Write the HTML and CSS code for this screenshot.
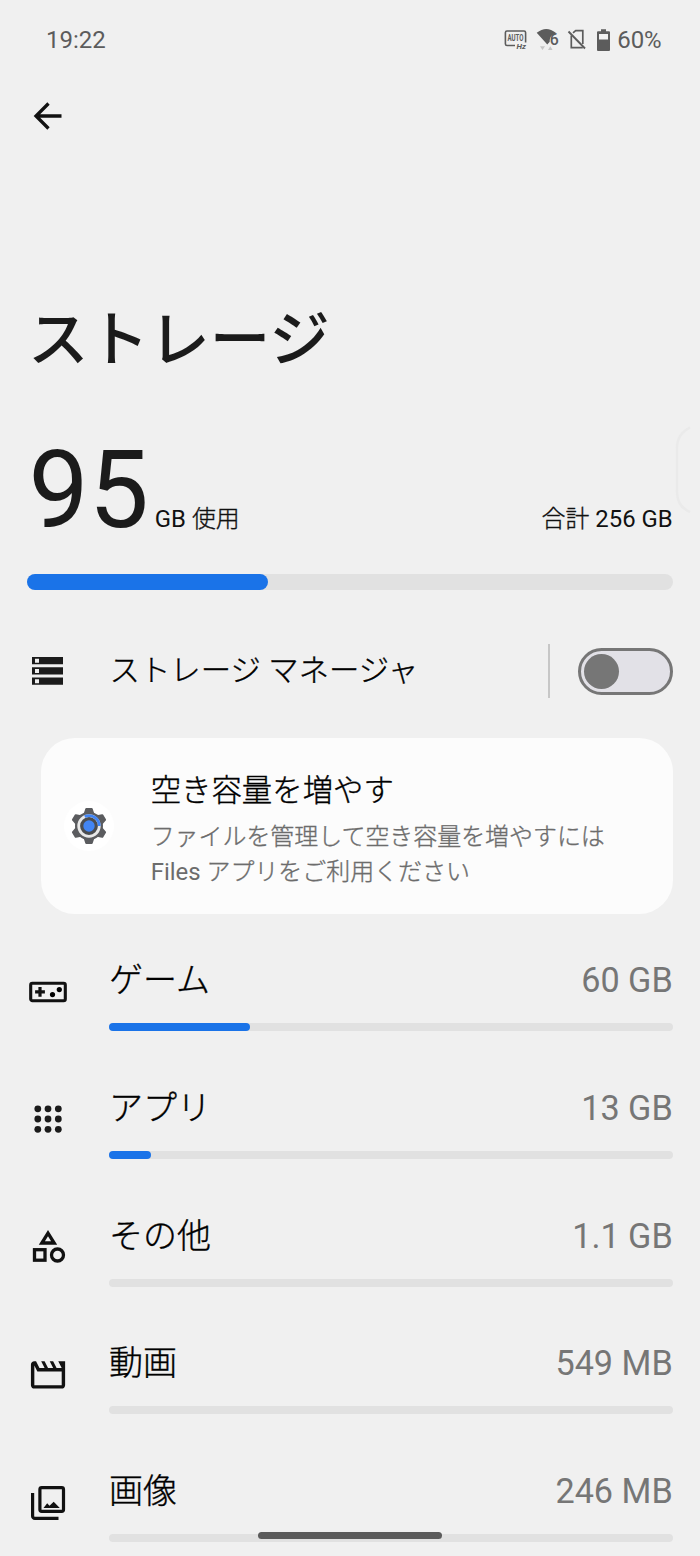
FILE: index.html
```html
<!DOCTYPE html>
<html lang="ja">
<head>
<meta charset="utf-8">
<title>ストレージ</title>
<link rel="stylesheet" href="styles.css">
</head>
<body>
<div class="screen">
  <header class="status">
    <span class="clock">19:22</span>
    <div class="status-icons">
      <svg class="ic-hz" width="24" height="24" viewBox="0 0 24 24">
        <path d="M11 17.500H3A1.600 1.600 0 0 1 1.400 16V4.500A1.600 1.600 0 0 1 3 3H20A1.600 1.600 0 0 1 21.600 4.500V14.500" fill="none" stroke="#5c5c5c" stroke-width="1.600"/>
        <text x="3.500" y="12.800" class="hz-auto" textLength="16" lengthAdjust="spacingAndGlyphs">AUTO</text>
        <text x="12.500" y="21.300" class="hz-unit">Hz</text>
      </svg>
      <svg class="ic-wifi" width="24" height="24" viewBox="0 0 24 24">
        <path d="M.7 4.800Q10.300-2.800 19.800 4.800L18.500 6.300C15 7 13.700 10 13.700 13.800L11.300 16.500Z" fill="#5c5c5c"/>
        <path d="M4 18.300h5l-2.500 3.700zM12 22h4.600l-2.300-3.700z" fill="#c6c6c6"/>
        <text x="13.800" y="17" class="wifi-six" textLength="9" lengthAdjust="spacingAndGlyphs">6</text>
      </svg>
      <svg class="ic-sim" width="20" height="22" viewBox="0 0 20 22">
        <path d="M6 3.800L8.700 1.600H15.800V15M15.800 18.600H4.300V6.500" fill="none" stroke="#5c5c5c" stroke-width="1.700"/>
        <path d="M1.500 2.500L18 19.500" stroke="#5c5c5c" stroke-width="1.900"/>
      </svg>
      <svg class="ic-batt" width="13" height="22" viewBox="0 0 13 22">
        <path fill-rule="evenodd" d="M4 .3H9V2.300H12A1 1 0 0 1 13 3.300V21A1 1 0 0 1 12 22H1A1 1 0 0 1 0 21V3.300A1 1 0 0 1 1 2.300H4ZM2 5V10.500H11V5Z" fill="#5c5c5c"/>
      </svg>
      <span class="percent">60%</span>
    </div>
  </header>

  <nav class="toolbar">
    <svg width="28" height="28" viewBox="0 0 28 28"><path d="M14.500 1.500L2 14L14.500 26.500M2 14H27.500" fill="none" stroke="#111" stroke-width="3.300"/></svg>
  </nav>

  <h1 class="title">ストレージ</h1>

  <section class="usage">
    <div class="used"><span class="number">95</span><span class="unit">GB <span class="light">使用</span></span></div>
    <span class="total"><span class="light">合計</span> 256 GB</span>
  </section>
  <div class="meter"><div class="meter-fill" style="width:241px"></div></div>

  <section class="manager">
    <svg class="manager-icon" width="31" height="28" viewBox="0 0 31 28">
      <path d="M0 0H31V7.300H0ZM0 10.300H31V17.600H0ZM0 20.500H31V27.800H0Z" fill="#1b1b1b"/>
      <path d="M3 1.700h4v4h-4zM3 12h4v4h-4zM3 22.200h4v4h-4z" fill="#f0f0f0"/>
    </svg>
    <span class="manager-label light">ストレージ マネージャ</span>
    <span class="divider"></span>
    <span class="switch"><span class="thumb"></span></span>
  </section>

  <section class="card">
    <div class="card-icon">
      <svg width="36" height="38" viewBox="-18 -19 36 38">
        <g fill="#5b5c5f">
          <circle r="14"/>
          <path id="tooth" d="M-5.400-12L-3.700-17.200Q-3.500-18-2.700-18H2.700Q3.500-18 3.700-17.200L5.400-12Z"/>
          <use href="#tooth" transform="rotate(60)"/><use href="#tooth" transform="rotate(120)"/><use href="#tooth" transform="rotate(180)"/><use href="#tooth" transform="rotate(240)"/><use href="#tooth" transform="rotate(300)"/>
        </g>
        <circle r="10.300" fill="#4b4d50" stroke="#e8e8e8" stroke-width="2.800"/>
        <path d="M-4.300-9.400A10.300 10.300 0 0 1 10.300 0" fill="none" stroke="#4285f4" stroke-width="2.800"/>
        <circle r="5.700" fill="#4285f4"/>
      </svg>
    </div>
    <div class="card-text">
      <div class="card-title light">空き容量を増やす</div>
      <div class="card-body"><span class="light">ファイルを管理して空き容量を増やすには</span><br>Files <span class="light">アプリをご利用ください</span></div>
    </div>
  </section>

  <ul class="list">
    <li class="row">
      <svg width="40" height="40" viewBox="0 0 40 40">
        <rect x="2.700" y="11.300" width="34.600" height="17.400" rx="1.700" fill="none" stroke="#111" stroke-width="3.100"/>
        <path d="M12 15v9.800M7.100 19.900h9.800" stroke="#111" stroke-width="3.200"/>
        <circle cx="24.500" cy="22.600" r="2.600"/><circle cx="31.300" cy="17.600" r="2.600"/>
      </svg>
      <div class="row-main">
        <div class="row-head"><span class="name light">ゲーム</span><span class="size">60 GB</span></div>
        <div class="bar"><div class="bar-fill" style="width:140.500px"></div></div>
      </div>
    </li>
    <li class="row">
      <svg width="40" height="40" viewBox="0 0 40 40" fill="#1b1b1b">
        <circle cx="9.800" cy="9.800" r="3.400"/><circle cx="20" cy="9.800" r="3.400"/><circle cx="30.300" cy="9.800" r="3.400"/>
        <circle cx="9.800" cy="20" r="3.400"/><circle cx="20" cy="20" r="3.400"/><circle cx="30.300" cy="20" r="3.400"/>
        <circle cx="9.800" cy="30.300" r="3.400"/><circle cx="20" cy="30.300" r="3.400"/><circle cx="30.300" cy="30.300" r="3.400"/>
      </svg>
      <div class="row-main">
        <div class="row-head"><span class="name light">アプリ</span><span class="size">13 GB</span></div>
        <div class="bar"><div class="bar-fill" style="width:41.500px"></div></div>
      </div>
    </li>
    <li class="row">
      <svg width="40" height="40" viewBox="0 0 40 40" fill="none" stroke="#111" stroke-width="3.300">
        <path d="M20 6.200L26.200 16H13.800Z"/>
        <rect x="6.500" y="22.700" width="10.500" height="10.500"/>
        <circle cx="29.500" cy="28" r="6"/>
      </svg>
      <div class="row-main">
        <div class="row-head"><span class="name light">その他</span><span class="size">1.1 GB</span></div>
        <div class="bar"></div>
      </div>
    </li>
    <li class="row">
      <svg width="40" height="40" viewBox="0 0 40 40">
        <path transform="translate(-.5 -.6) scale(1.710)" d="M4 6.470L5.760 10H20v8H4V6.470M22 4h-4l2 4h-3l-2-4h-2l2 4h-3l-2-4H8l2 4H7L5 4H4c-1.100 0-2 .9-2 2v12c0 1.100.9 2 2 2h16c1.100 0 2-.9 2-2V4z" fill="#111"/>
      </svg>
      <div class="row-main">
        <div class="row-head"><span class="name light">動画</span><span class="size">549 MB</span></div>
        <div class="bar"></div>
      </div>
    </li>
    <li class="row">
      <svg width="40" height="40" viewBox="0 0 40 40">
        <rect x="11.900" y="4.600" width="23.600" height="23.800" rx="1.800" fill="none" stroke="#111" stroke-width="3.200"/>
        <path d="M4.600 10V33A2.200 2.200 0 0 0 6.800 35.300H30.500" fill="none" stroke="#111" stroke-width="3.200"/>
        <path d="M15.500 25L19.200 20.200L21.500 22.700L25.700 18.800L31.800 25Z" fill="#111"/>
      </svg>
      <div class="row-main">
        <div class="row-head"><span class="name light">画像</span><span class="size">246 MB</span></div>
        <div class="bar"></div>
      </div>
    </li>
  </ul>

  <div class="edge-handle"><svg width="16" height="88" viewBox="0 0 16 88"><path d="M15 1.500C6 6 2 12 2 22V64C2 76 6 82 15 86" fill="none" stroke="#eaeaea" stroke-width="2.500"/></svg></div>
  <div class="home-pill"></div>
</div>
</body>
</html>
```

FILE: styles.css
```css
* { box-sizing: border-box; }
body {
  margin: 0;
  background: #f0f0f0;
  color: #1b1b1b;
  font-family: Roboto, "Noto Sans CJK JP", sans-serif;
}
.screen {
  position: relative;
  width: 700px;
  height: 1556px;
  overflow: hidden;
  display: flex;
  flex-direction: column;
  padding: 0 27.300px 0 27px;
}
.screen > * { flex-shrink: 0; }
svg { display: block; flex-shrink: 0; overflow: visible; }
.light { font-weight: 300; -webkit-text-stroke: .35px currentColor; }

.status {
  height: 80px;
  display: flex;
  justify-content: space-between;
  align-items: center;
  padding: 0 11px 0 19px;
  color: #5c5c5c;
  font-size: 24px;
}
.clock, .percent { line-height: 28px; }
.status-icons { display: flex; align-items: center; }
.ic-wifi { margin-left: 8px; }
.ic-sim { margin-left: 7px; }
.ic-batt { margin: 0 7px 0 10px; }
.hz-auto { font: 700 8.500px Roboto, sans-serif; fill: #5c5c5c; }
.hz-unit { font: italic 700 8px Roboto, sans-serif; fill: #5c5c5c; }
.wifi-six { font: 500 17px Roboto, sans-serif; fill: #5c5c5c; }

.toolbar { height: 72px; padding: 22px 0 0 7px; }

.title {
  margin: 147px 0 0 1px;
  font-size: 60.600px;
  font-weight: 500;
  line-height: 84px;
}

.usage {
  height: 191px;
  display: flex;
  justify-content: space-between;
  align-items: baseline;
  padding: 44px 0 0 1.500px;
  font-size: 23.900px;
  color: #111;
}
.number { font-size: 107px; line-height: 127px; margin-right: 6px; color: #1b1b1b; }

.meter { height: 16px; border-radius: 8px; background: #e1e1e1; }
.meter-fill { height: 16px; border-radius: 8px; background: #1a73e8; }

.manager {
  height: 148px;
  padding-top: 14px;
  display: flex;
  align-items: center;
}
.manager-icon { margin-left: 5px; }
.manager-label { margin-left: 46.500px; font-size: 30.400px; line-height: 44px; color: #000; }
.divider { width: 2px; height: 54px; margin-left: auto; background: #c7c7c7; }
.switch {
  width: 95px;
  height: 47px;
  margin-left: 28px;
  padding: 3px;
  border: 3px solid #767676;
  border-radius: 24px;
  background: #e2e1e7;
}
.thumb { display: block; width: 35px; height: 35px; border-radius: 50%; background: #767676; }

.card {
  width: 632px;
  height: 176px;
  margin-left: 13.700px;
  padding-left: 23px;
  border-radius: 34px;
  background: #fcfcfc;
  display: flex;
  align-items: center;
}
.card-icon {
  width: 50px;
  height: 50px;
  border-radius: 50%;
  background: #fff;
  display: flex;
  align-items: center;
  justify-content: center;
}
.card-text { margin-left: 37px; padding-top: 7px; }
.card-title { font-size: 30.400px; line-height: 44px; color: #000; }
.card-body { margin-top: 7px; font-size: 23.950px; line-height: 35px; color: #6c6c6c; }

.list { list-style: none; margin: 43px 0 0; padding: 0; }
.row { height: 127.800px; display: flex; align-items: flex-start; }
.row > svg { margin: 14.700px 0 0 .5px; }
.row-main { flex: 1; margin-left: 41.500px; }
.row-head {
  height: 66px;
  display: flex;
  justify-content: space-between;
  align-items: baseline;
  font-size: 34px;
  line-height: 46px;
}
.name { color: #000; }
.size { color: #767676; font-size: 34.200px; }
.bar { height: 8px; border-radius: 4px; background: #e1e1e1; }
.bar-fill { height: 8px; border-radius: 4px; background: #1a73e8; }

.edge-handle { position: absolute; left: 675px; top: 426px; }
.home-pill {
  position: absolute;
  left: 258px;
  top: 1532px;
  width: 184px;
  height: 7px;
  border-radius: 4px;
  background: #5b5b5b;
}
```
